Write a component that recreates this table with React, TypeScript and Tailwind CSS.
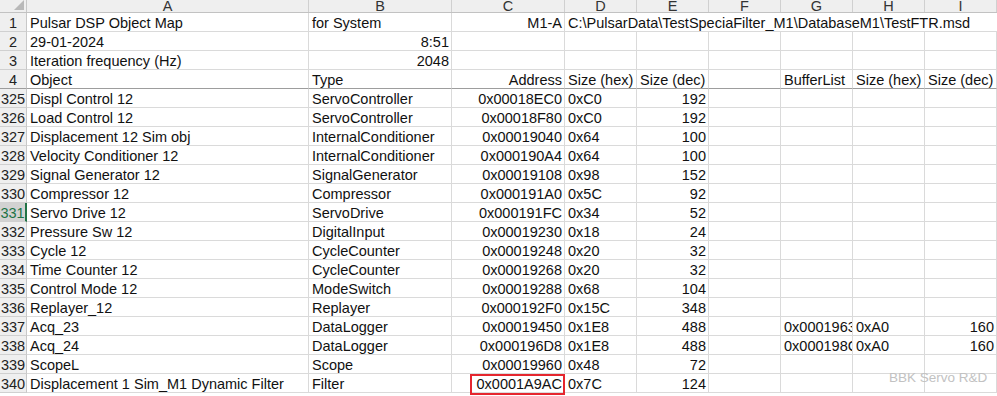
import React from "react";

const grid = "grid grid-cols-[27px_282px_143px_113px_72px_72px_72px_72px_72px_72px_1fr]";
const letters = ["A", "B", "C", "D", "E", "F", "G", "H", "I", ""];

type Row = { n: number; cells: string[]; selected?: boolean };

const rows: Row[] = [
  { n: 325, cells: ["Displ Control 12", "ServoController", "0x00018EC0", "0xC0", "192"] },
  { n: 326, cells: ["Load Control 12", "ServoController", "0x00018F80", "0xC0", "192"] },
  { n: 327, cells: ["Displacement 12 Sim obj", "InternalConditioner", "0x00019040", "0x64", "100"] },
  { n: 328, cells: ["Velocity Conditioner 12", "InternalConditioner", "0x000190A4", "0x64", "100"] },
  { n: 329, cells: ["Signal Generator 12", "SignalGenerator", "0x00019108", "0x98", "152"] },
  { n: 330, cells: ["Compressor 12", "Compressor", "0x000191A0", "0x5C", "92"] },
  { n: 331, cells: ["Servo Drive 12", "ServoDrive", "0x000191FC", "0x34", "52"], selected: true },
  { n: 332, cells: ["Pressure Sw 12", "DigitalInput", "0x00019230", "0x18", "24"] },
  { n: 333, cells: ["Cycle 12", "CycleCounter", "0x00019248", "0x20", "32"] },
  { n: 334, cells: ["Time Counter 12", "CycleCounter", "0x00019268", "0x20", "32"] },
  { n: 335, cells: ["Control Mode 12", "ModeSwitch", "0x00019288", "0x68", "104"] },
  { n: 336, cells: ["Replayer_12", "Replayer", "0x000192F0", "0x15C", "348"] },
  { n: 337, cells: ["Acq_23", "DataLogger", "0x00019450", "0x1E8", "488", "", "0x00019630", "0xA0", "160"] },
  { n: 338, cells: ["Acq_24", "DataLogger", "0x000196D8", "0x1E8", "488", "", "0x000198C0", "0xA0", "160"] },
  { n: 339, cells: ["ScopeL", "Scope", "0x00019960", "0x48", "72"] },
  { n: 340, cells: ["Displacement 1 Sim_M1 Dynamic Filter", "Filter", "0x0001A9AC", "0x7C", "124"] },
];

function Cell({ text, right, noBorder, overflow }: { text?: string; right?: boolean; noBorder?: boolean; overflow?: boolean }) {
  return (
    <div
      className={`h-[19px] border-b border-[#dadada] px-[3px] pt-[2px] leading-[17px] whitespace-nowrap ${noBorder ? "" : "border-r"} ${overflow ? "overflow-visible" : "overflow-hidden"} ${right ? "text-right pr-[2px]" : "text-left"}`}
    >
      {text}
    </div>
  );
}

function RowHead({ n, selected }: { n: number; selected?: boolean }) {
  return (
    <div
      className={`h-[19px] pt-[2px] leading-[17px] text-center border-b border-[#d0d0d0] ${selected ? "bg-[#d2d2d2] text-[#217346] border-r-2 border-r-[#217346]" : "bg-[#efefef] text-[#222] border-r border-r-[#c8c8c8]"}`}
    >
      {n}
    </div>
  );
}

export default function App() {
  // numeric columns: C (2), E (4), I (8) right aligned in data rows
  const rightCols = [2, 4, 8];

  return (
    <div className="relative w-[997px] h-[396px] overflow-hidden bg-white text-[14.5px] text-[#111] font-['Liberation_Sans',Arial,sans-serif]">
      {/* column letters */}
      <div className={`${grid} h-[13px] bg-[#efefef] border-b border-[#c2c2c2]`}>
        <div className="relative border-r border-[#c8c8c8]">
          <svg className="absolute right-[2px] bottom-[2px]" width="10" height="10" viewBox="0 0 10 10">
            <polygon points="10,0 10,10 0,10" fill="#b9b9b9" />
          </svg>
        </div>
        {letters.map((l, i) => (
          <div key={i} className="h-[12px] overflow-hidden border-r border-[#d0d0d0] text-center text-[#333] leading-[13px]">
            {l}
          </div>
        ))}
      </div>

      {/* header rows 1-4 */}
      <div className={`${grid} bg-white`}>
        <RowHead n={1} />
        <Cell text="Pulsar DSP Object Map" />
        <Cell text="for System" />
        <Cell text="M1-A" right />
        <Cell text="C:\PulsarData\TestSpeciaFilter_M1\DatabaseM1\TestFTR.msd" noBorder overflow />
        <Cell noBorder />
        <Cell noBorder />
        <Cell noBorder />
        <Cell noBorder />
        <Cell noBorder />
      </div>
      <div className={`${grid} bg-white`}>
        <RowHead n={2} />
        <Cell text="29-01-2024" />
        <Cell text="8:51" right />
        {Array.from({ length: 7 }).map((_, i) => <Cell key={i} />)}
      </div>
      <div className={`${grid} bg-white`}>
        <RowHead n={3} />
        <Cell text="Iteration frequency (Hz)" />
        <Cell text="2048" right />
        {Array.from({ length: 7 }).map((_, i) => <Cell key={i} />)}
      </div>
      <div className={`${grid} bg-white`}>
        <div className="h-[19px] pt-[2px] leading-[17px] text-center bg-[#efefef] text-[#222] border-r border-[#c8c8c8] border-b border-b-[#9d9d9d]">4</div>
        {[
          ["Object", false],
          ["Type", false],
          ["Address", true],
          ["Size (hex)", false],
          ["Size (dec)", false],
          ["", false],
          ["BufferList", false],
          ["Size (hex)", false],
          ["Size (dec)", false],
        ].map(([t, r], i) => (
          <div
            key={i}
            className={`h-[19px] border-r border-[#dadada] border-b border-b-[#9d9d9d] px-[3px] pt-[2px] leading-[17px] whitespace-nowrap overflow-hidden ${r ? "text-right pr-[2px]" : ""}`}
          >
            {t as string}
          </div>
        ))}
        <div className="h-[19px] border-b border-b-[#9d9d9d]" />
      </div>

      {/* data rows */}
      {rows.map((r) => (
        <div key={r.n} className={`${grid} bg-white`}>
          <RowHead n={r.n} selected={r.selected} />
          {Array.from({ length: 10 }).map((_, i) => (
            <Cell key={i} text={r.cells[i]} right={rightCols.includes(i)} />
          ))}
        </div>
      ))}

      {/* annotation box */}
      <div className="absolute left-[470px] top-[374px] w-[95px] h-[21px] border-2 border-[#e5262e]" />

      {/* watermark */}
      <div className="absolute left-[889px] top-[370px] text-[13.5px] leading-[16px] text-[#c2c2c2] whitespace-nowrap">
        BBK Servo R&amp;D
      </div>
    </div>
  );
}
